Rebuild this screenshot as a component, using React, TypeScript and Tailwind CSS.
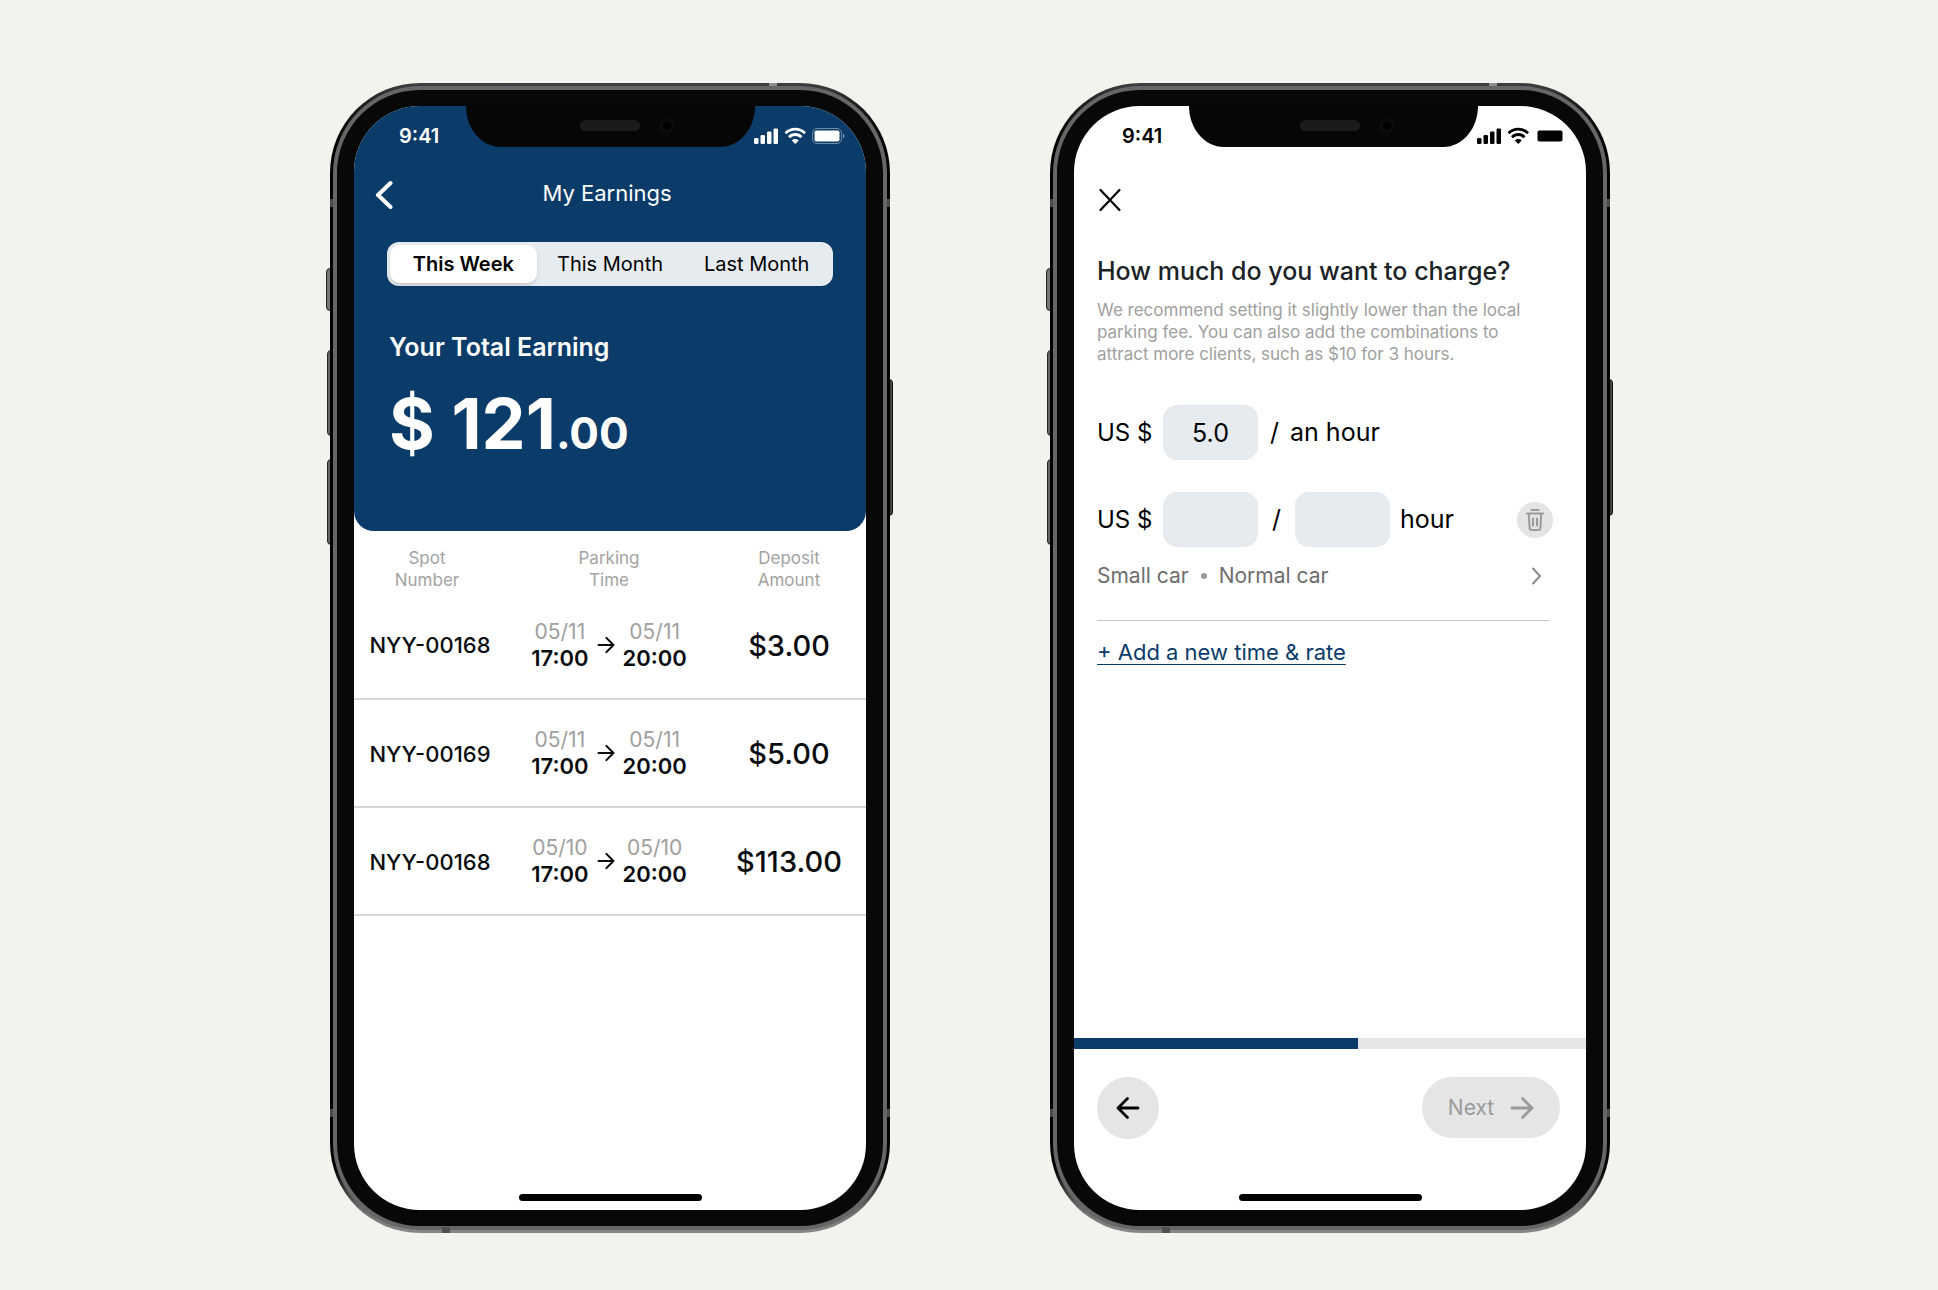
import { ReactNode } from "react";
import clsx from "clsx";

const periods = ["This Week", "This Month", "Last Month"];

const deposits = [
  { spot: "NYY-00168", date: "05/11", amount: "$3.00" },
  { spot: "NYY-00169", date: "05/11", amount: "$5.00" },
  { spot: "NYY-00168", date: "05/10", amount: "$113.00" },
];

function Arrow({ className }: { className?: string }) {
  return (
    <svg
      viewBox="0 0 24 24"
      className={className}
      fill="none"
      stroke="currentColor"
      strokeWidth="2.8"
      strokeLinecap="round"
      strokeLinejoin="round"
      aria-hidden="true"
    >
      <path d="M2 12H22M12.5 2.500L22 12L12.5 21.5" />
    </svg>
  );
}

function StatusBar({ outlined }: { outlined?: boolean }) {
  return (
    <div
      className={clsx(
        "flex h-[60px] items-center justify-between",
        outlined ? "pl-[45px] pr-[20px] text-white" : "pl-[48px] pr-[17px] text-black"
      )}
    >
      <span className="text-xl font-semibold">9:41</span>
      <svg width="92" height="18" viewBox="0 0 92 18" fill="currentColor" aria-hidden="true">
        <rect x="0" y="11" width="4.5" height="6" rx="1.2" />
        <rect x="6.5" y="8" width="4.5" height="9" rx="1.2" />
        <rect x="13" y="4.5" width="4.5" height="12.5" rx="1.2" />
        <rect x="19.5" y="1.5" width="4.5" height="15.5" rx="1.2" />
        <g fill="none" stroke="currentColor" strokeWidth="2.8">
          <path d="M31.500 6.300A13.500 13.500 0 0 1 51 6.300" />
          <path d="M35 10.200A8.600 8.600 0 0 1 47.500 10.200" />
        </g>
        <path d="M41.250 17L37.800 13.400A5 5 0 0 1 44.700 13.400Z" />
        {outlined && (
          <>
            <rect x="58.5" y="1.5" width="29" height="15" rx="4.5" fill="none" stroke="currentColor" strokeOpacity="0.4" />
            <path d="M89 6.500A2.800 2.800 0 0 1 89 11.500Z" opacity="0.45" />
          </>
        )}
        <rect x="60.5" y="3.5" width="25" height="11" rx="1.8" />
      </svg>
    </div>
  );
}

function Phone({ children, notch }: { children: ReactNode; notch: string }) {
  return (
    <div className="relative w-full max-w-[560px]">
      {/* side buttons */}
      <div className="absolute -left-1 top-[185px] h-[43px] w-2 rounded-l-sm border border-[#222] bg-[#777]" />
      <div className="absolute -left-[3px] top-[267px] h-[86px] w-2 rounded-l-sm border border-[#222] bg-[#666]" />
      <div className="absolute -left-[3px] top-[376px] h-[86px] w-2 rounded-l-sm border border-[#222] bg-[#666]" />
      <div className="absolute -right-[3px] top-[296px] h-[137px] w-2 rounded-r-sm border border-[#111] bg-[#444]" />
      <div className="relative rounded-[90px] bg-[linear-gradient(to_bottom,#3c403f_0,#1a1c1c_24px,#000_60px,#000_1085px,#6c6a6b_1125px,#8a8788_100%)] p-[3px]">
        {/* antenna bands */}
        <div className="absolute inset-x-0 top-[116px] h-2 bg-[#4a4a4a]" />
        <div className="absolute inset-x-0 bottom-[116px] h-2 bg-[#4a4a4a]" />
        <div className="absolute right-[113px] top-0 h-[3px] w-2 bg-[#8e8e8e]" />
        <div className="absolute bottom-0 left-[112px] z-10 h-[6px] w-2 bg-[#515151]" />
        <div className="relative rounded-[87px] bg-[#666667] p-[4px]">
          <div className="rounded-[83px] bg-[#080808] px-[17px] py-[16px]">
            <div className="relative flex min-h-[1104px] flex-col overflow-hidden rounded-[66px] bg-white">
              <div className="flex flex-1 flex-col">{children}</div>
              <svg
                viewBox="0 0 289 41"
                className={clsx("absolute top-0 h-[41px] w-[289px]", notch)}
                aria-hidden="true"
              >
                <path d="M0 0H289C289 22 274 41 254 41H35C15 41 0 22 0 0Z" fill="#060606" />
              </svg>
              <div className="absolute left-[226px] top-[14px] h-[11px] w-[60px] rounded-full bg-[#1b1b1b]" />
              <div className="absolute left-[305px] top-[12px] size-4 rounded-full border-4 border-[#0b0b0b] bg-black" />
              <div className="mx-auto mb-[9px] h-[7px] w-[183px] rounded-full bg-black" />
            </div>
          </div>
        </div>
      </div>
    </div>
  );
}

function TimeStamp({ date, time }: { date: string; time: string }) {
  return (
    <div className="text-center leading-[26px]">
      <div className="text-[21px] text-[#a0a0a0]">{date}</div>
      <div className="text-[22px] font-semibold">{time}</div>
    </div>
  );
}

function EarningsScreen() {
  return (
    <Phone notch="left-[112px]">
      <header className="h-[425px] rounded-b-[20px] bg-[#0a3b69] text-white">
        <StatusBar outlined />
        <div className="grid grid-cols-[1fr_auto_1fr] items-center pl-[20px] pr-[26px] pt-[10px]">
          <button type="button" aria-label="Back">
            <svg width="20" height="32" viewBox="0 0 20 32" fill="none" stroke="currentColor" strokeWidth="4" strokeLinecap="round" strokeLinejoin="round">
              <path d="M16.500 6L4 18L16.500 30" />
            </svg>
          </button>
          <h1 className="text-[22px] leading-[34px]">My Earnings</h1>
        </div>
        <div className="mx-[33px] mt-[32px] flex h-[44px] rounded-xl bg-[#e6ebef] p-[3px] text-black">
          {periods.map((period, i) => (
            <button
              key={period}
              type="button"
              className={clsx(
                "flex-1 rounded-[10px] text-xl",
                i === 0 && "bg-white font-semibold shadow-md"
              )}
            >
              {period}
            </button>
          ))}
        </div>
        <div className="px-[35px] pt-[44px]">
          <h2 className="text-[25px] font-semibold leading-[34px]">Your Total Earning</h2>
          <p className="mt-[18px] text-[70px] font-bold leading-[84px]">
            $ 121<span className="text-[44px]">.00</span>
          </p>
        </div>
      </header>
      <table className="w-full table-fixed text-center text-[#090d10]">
        <thead>
          <tr className="text-[17px] leading-[22px] text-[#a3a3a3]">
            <th className="w-[146px] pt-[16px] font-normal">Spot<br />Number</th>
            <th className="w-[218px] pt-[16px] font-normal">Parking<br />Time</th>
            <th className="pr-[6px] pt-[16px] font-normal">Deposit<br />Amount</th>
          </tr>
        </thead>
        <tbody>
          {deposits.map((row, i) => (
            <tr key={i} className="h-[108px] border-b-2 border-[#d6d6d6]">
              <td className="pl-[6px] pt-[2px] text-[22px] font-medium">{row.spot}</td>
              <td>
                <div className="flex items-center justify-center gap-2">
                  <TimeStamp date={row.date} time="17:00" />
                  <Arrow className="size-[18px]" />
                  <TimeStamp date={row.date} time="20:00" />
                </div>
              </td>
              <td className="pr-[6px] pt-[2px] text-[29px] font-medium">{row.amount}</td>
            </tr>
          ))}
        </tbody>
      </table>
    </Phone>
  );
}

function RateInput({ label, value }: { label: string; value?: string }) {
  return (
    <input
      aria-label={label}
      defaultValue={value}
      className="h-[55px] w-[95px] rounded-[14px] bg-[#e6ebef] text-center"
    />
  );
}

function ChargeScreen() {
  return (
    <Phone notch="left-[115px]">
      <StatusBar />
      <div className="pl-[23px] pr-[37px] text-black">
        <button type="button" aria-label="Close" className="mt-[21px] block">
          <svg width="26" height="26" viewBox="0 0 26 26" fill="none" stroke="currentColor" strokeWidth="2.2" strokeLinecap="round">
            <path d="M3.500 3L22.500 23M22.500 3L3.500 23" />
          </svg>
        </button>
        <h1 className="mt-[41px] whitespace-nowrap text-[25px] font-medium leading-[34px] text-[#1c2326]">
          How much do you want to charge?
        </h1>
        <p className="mt-[11px] text-[17px] leading-[22px] text-[#a0a0a0]">
          We recommend setting it slightly lower than the local parking fee. You can also add the
          combinations to attract more clients, such as $10 for 3 hours.
        </p>
        <div className="mt-[40px] flex items-center text-[25px]">
          <span className="w-[66px] text-2xl">US $</span>
          <RateInput label="Price for an hour" value="5.0" />
          <span className="ml-[12px] mr-[11px]">/</span>
          <span>an hour</span>
        </div>
        <div className="mt-[32px] flex items-center text-[25px]">
          <span className="w-[66px] text-2xl">US $</span>
          <RateInput label="Price" />
          <span className="w-[37px] text-center">/</span>
          <RateInput label="Hours" />
          <span className="ml-[10px]">hour</span>
          <button
            type="button"
            aria-label="Delete rate"
            className="-mr-1 ml-auto grid size-[36px] place-items-center rounded-full bg-[#e4e4e4] text-[#9a9a9a]"
          >
            <svg width="20" height="24" viewBox="0 0 20 24" fill="none" stroke="currentColor" strokeWidth="2" strokeLinecap="round" strokeLinejoin="round">
              <path d="M6.500 2H13.500M2 5.500H18M3.800 5.500L4.600 20Q4.700 22 6.600 22H13.400Q15.300 22 15.400 20L16.200 5.500M8 10.500V17.500M12 10.500V17.500" />
            </svg>
          </button>
        </div>
        <button
          type="button"
          className="mt-[13px] flex w-full items-center justify-between text-[21px] leading-[32px] text-[#6d6d6d]"
        >
          <span className="flex items-center gap-3">
            Small car
            <span className="size-[6px] rounded-full bg-[#9a9a9a]" />
            Normal car
          </span>
          <svg width="24" height="20" viewBox="0 0 24 20" fill="none" stroke="#8c8c8c" strokeWidth="2" strokeLinecap="round" strokeLinejoin="round">
            <path d="M8 2.500L15 10L8 17.500" />
          </svg>
        </button>
        <hr className="mt-[28px] border-[#c4c4c4]" />
        <a
          href="#add-rate"
          className="mt-[15px] inline-block text-[22px] leading-[32px] text-[#0a3b69] underline decoration-1 underline-offset-4"
        >
          + Add a new time &amp; rate
        </a>
      </div>
      <footer className="mt-auto">
        <div className="h-[11px] bg-[#e5e5e5]">
          <div className="h-full w-[55.5%] bg-[#0a3b69]" />
        </div>
        <div className="flex items-start justify-between pb-[55px] pl-[23px] pr-[26px] pt-[28px]">
          <button
            type="button"
            aria-label="Previous"
            className="grid size-[62px] place-items-center rounded-full bg-[#e5e5e5] text-black"
          >
            <Arrow className="size-[24px] rotate-180" />
          </button>
          <button
            type="button"
            className="flex h-[61px] w-[138px] items-center justify-center gap-4 rounded-full bg-[#e5e5e5] text-[21px] text-[#9a9a9a]"
          >
            Next
            <Arrow className="size-[24px]" />
          </button>
        </div>
      </footer>
    </Phone>
  );
}

export default function App() {
  return (
    <main className="flex min-h-screen items-start justify-center gap-40 bg-[#f3f2ec] pl-[18px] pr-4 pt-[83px] font-['Inter',sans-serif]">
      <EarningsScreen />
      <ChargeScreen />
    </main>
  );
}
